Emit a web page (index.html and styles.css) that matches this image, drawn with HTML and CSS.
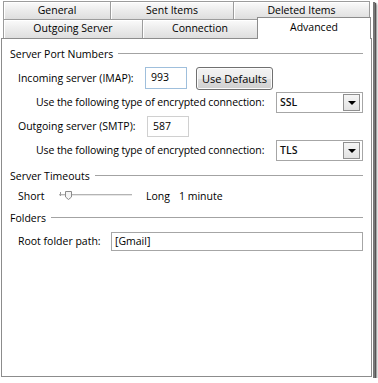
FILE: index.html
```html
<!DOCTYPE html>
<html lang="en">
<head>
    <meta charset="UTF-8">
    <title>Account Settings - Advanced</title>
    <link rel="stylesheet" href="styles.css">
</head>
<body>
    <div class="shot">
        <!-- Tab strip, two rows -->
        <div class="tabs">
            <div class="tab-row">
                <div class="tab tab-first w-general">General</div>
                <div class="tab w-sent">Sent Items</div>
                <div class="tab w-deleted">Deleted Items</div>
            </div>
            <div class="tab-row">
                <div class="tab tab-first w-outgoing">Outgoing Server</div>
                <div class="tab w-connection">Connection</div>
                <div class="tab tab-active w-advanced">Advanced</div>
            </div>
        </div>

        <!-- Advanced page -->
        <div class="panel">
            <div class="group-title">Server Port Numbers</div>

            <div class="row row-first">
                <label class="lbl lbl-imap">Incoming server (IMAP):</label>
                <div class="textbox port port-in">993</div>
                <button class="btn">Use Defaults</button>
            </div>
            <div class="row row-sub">
                <label class="lbl lbl-enc">Use the following type of encrypted connection:</label>
                <div class="combo"><span class="combo-text">SSL</span><span class="combo-btn"></span></div>
            </div>
            <div class="row">
                <label class="lbl lbl-smtp">Outgoing server (SMTP):</label>
                <div class="textbox port port-out">587</div>
            </div>
            <div class="row row-sub">
                <label class="lbl lbl-enc">Use the following type of encrypted connection:</label>
                <div class="combo"><span class="combo-text">TLS</span><span class="combo-btn"></span></div>
            </div>

            <div class="group-title group-timeouts">Server Timeouts</div>
            <div class="row row-slider">
                <span class="lbl lbl-short">Short</span>
                <svg class="slider" width="73" height="14" viewBox="0 0 73 14">
                    <rect x="0" y="5" width="73" height="1" fill="#b4b4b4"/>
                    <rect x="0" y="6" width="73" height="1" fill="#e6e6e6"/>
                    <rect x="1" y="3" width="1" height="4" fill="#9a9a9a"/>
                    <path d="M6.5 2.5 H12.5 V8 L9.5 10.5 L6.5 8 Z" fill="#f4f4f4" stroke="#8a8a8a"/>
                </svg>
                <span class="lbl lbl-long">Long</span>
                <span class="lbl">1 minute</span>
            </div>

            <div class="group-title group-folders">Folders</div>
            <div class="row row-root">
                <label class="lbl lbl-root">Root folder path:</label>
                <div class="textbox root-path">[Gmail]</div>
            </div>
        </div>
    </div>
</body>
</html>
```

FILE: styles.css
```css
body {
    margin: 0;
    background-color: #fff;
    font-family: "Open Sans", "Liberation Sans", sans-serif;
    font-size: 10.5px;
    color: #000;
}
.shot {
    width: 373px;
    height: 378px;
    background-color: #fff;
    box-shadow: 2px 2px 0 #777, 3px 3px 1px #555, 4px 4px 2px #999;
}

/* tabs */
.tabs {
    padding: 1px 0 0 3px;
}
.tab-row {
    display: flex;
}
.tab-row:first-child {
    height: 18px;
}
.tab-row:last-child {
    height: 19px;
}
.tab {
    box-sizing: border-box;
    height: 100%;
    line-height: 16px;
    text-align: center;
    background: linear-gradient(#fbfbfb, #ededed 45%, #dedede);
    border-top: 1px solid #9c9c9c;
    border-right: 1px solid #9c9c9c;
    box-shadow: inset 1px 1px 0 #fff;
}
.tab-first {
    border-left: 1px solid #9c9c9c;
}
.tab-active {
    position: relative;
    z-index: 1;
    height: 22px;
    margin-top: -2px;
    line-height: 18px;
    background: #fff;
    border-left: 1px solid #8c8c8c;
    border-top: 1px solid #8c8c8c;
    border-right: 1px solid #8c8c8c;
    box-shadow: none;
}
.w-general { width: 108px; }
.w-sent { width: 123px; }
.w-deleted { width: 136px; }
.w-outgoing { width: 140px; }
.w-connection { width: 115px; }
.w-advanced { width: 114px; margin-left: -1px; }

/* page */
.panel {
    box-sizing: border-box;
    width: 371px;
    height: 339px;
    margin-left: 1px;
    padding: 7px 8px 0 8px;
    border: 1px solid #8c8c8c;
}
.group-title {
    display: flex;
    align-items: center;
    height: 16px;
    white-space: nowrap;
}
.group-title::after {
    content: "";
    flex: 1;
    height: 0;
    margin-left: 5px;
    border-top: 1px solid #a3a3a3;
    border-bottom: 1px solid #fff;
}
.group-timeouts { margin-top: 6px; }
.group-folders { margin-top: 4px; }

.row {
    display: flex;
    align-items: center;
    height: 24px;
    padding-left: 8px;
}
.row-first { margin-top: 4px; }
.row-sub { padding-left: 26px; }
.row-slider { height: 20px; margin-top: 2px; }
.row-root { height: 20px; margin-top: 5px; }

.lbl {
    white-space: nowrap;
}
.lbl-imap { width: 127px; }
.lbl-smtp { width: 129px; }
.lbl-enc { width: 240px; letter-spacing: -0.1px; }
.lbl-short { width: 41px; }
.lbl-long { width: 33px; margin-left: 14px; }
.lbl-root { width: 93px; }

.textbox {
    box-sizing: border-box;
    border: 1px solid #b5bcc7;
    border-top-color: #a3a9b3;
    background: #fff;
    line-height: 18px;
}
.port {
    width: 42px;
    height: 22px;
    padding-left: 5px;
}
.port-in {
    border-color: #9fbfdc;
    line-height: 19px;
}
.port-out {
    height: 21px;
    border-color: #d0d0d0;
}
.root-path {
    width: 252px;
    height: 19px;
    padding-left: 3px;
    line-height: 16px;
    border-color: #a6a6a6;
}

.btn {
    box-sizing: border-box;
    width: 77px;
    height: 23px;
    margin-left: 9px;
    padding: 0;
    font-family: inherit;
    font-size: 11px;
    color: #000;
    border: 1px solid #707070;
    border-radius: 3px;
    background: linear-gradient(#f3f3f3, #ebebeb 50%, #dddddd 51%, #cfcfcf);
    box-shadow: inset 0 0 0 1px #fcfcfc;
}

.combo {
    box-sizing: border-box;
    display: flex;
    align-items: center;
    justify-content: space-between;
    width: 87px;
    height: 21px;
    padding: 0 2px 0 3px;
    border: 1px solid #a6a6a6;
    background: #fff;
}
.combo-text {
    font-weight: 600;
    color: #111;
}
.combo-btn {
    box-sizing: border-box;
    display: flex;
    align-items: center;
    justify-content: center;
    width: 17px;
    height: 17px;
    border: 1px solid #8f8f8f;
    background: linear-gradient(#f5f5f5, #e2e2e2);
}
.combo-btn::after {
    content: "";
    width: 0;
    height: 0;
    margin-top: 2px;
    border-left: 4px solid transparent;
    border-right: 4px solid transparent;
    border-top: 4px solid #000;
}

.slider {
    display: block;
}
```
